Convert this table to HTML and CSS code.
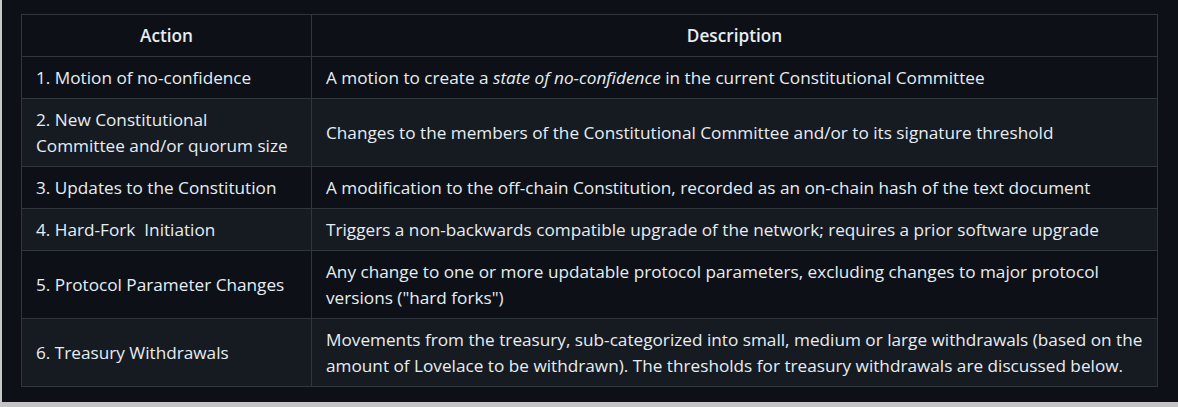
FILE: index.html
```html
<!DOCTYPE html>
<html lang="en">
<head>
<meta charset="utf-8">
<title>Governance actions</title>
<link rel="stylesheet" href="styles.css">
</head>
<body>
<div class="frame">
  <div class="panel">
    <table class="gov">
      <thead>
        <tr><th class="c1">Action</th><th>Description</th></tr>
      </thead>
      <tbody>
        <tr><td>1. Motion of no-confidence</td><td>A motion to create a <em>state of no-confidence</em> in the current Constitutional Committee</td></tr>
        <tr><td>2. New Constitutional Committee and/or quorum size</td><td>Changes to the members of the Constitutional Committee and/or to its signature threshold</td></tr>
        <tr><td>3. Updates to the Constitution</td><td>A modification to the off-chain Constitution, recorded as an on-chain hash of the text document</td></tr>
        <tr><td>4. Hard-Fork&nbsp; Initiation</td><td>Triggers a non-backwards compatible upgrade of the network; requires a prior software upgrade</td></tr>
        <tr><td>5. Protocol Parameter Changes</td><td>Any change to one or more updatable protocol parameters, excluding changes to major protocol versions ("hard forks")</td></tr>
        <tr><td>6. Treasury Withdrawals</td><td>Movements from the treasury, sub-categorized into small, medium or large withdrawals (based on the amount of Lovelace to be withdrawn). The thresholds for treasury withdrawals are discussed below.</td></tr>
      </tbody>
    </table>
  </div>
</div>
</body>
</html>
```
FILE: styles.css
```css
html, body {
  margin: 0;
  padding: 0;
  background: #c4c4c4;
}
.frame {
  width: 1178px;
  height: 407px;
  box-sizing: border-box;
  border-left: 2px solid #c8c8c8;
  border-bottom: 5px solid #c4c4c4;
  background: #0d1117;
}
.panel {
  padding: 14px 20px 0 19px;
}
.gov {
  width: 1137px;
  border-collapse: collapse;
  font-family: "Open Sans", "Noto Sans", sans-serif;
  font-size: 17.2px;
  line-height: 26px;
  color: #e6edf3;
}
.gov th, .gov td {
  border: 1px solid #30363d;
  padding: 8px 14px 7px;
  vertical-align: middle;
}
.gov th {
  font-weight: 600;
  text-align: center;
}
.gov .c1 {
  width: 261px;
}
.gov tbody tr:nth-child(2n) {
  background: #161b22;
}
```
